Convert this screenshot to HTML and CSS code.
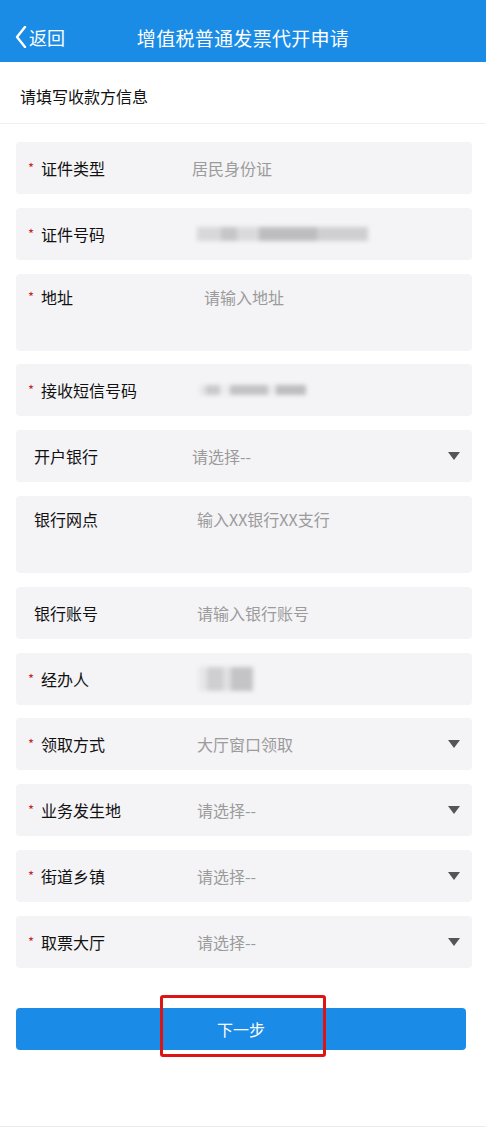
FILE: index.html
```html
<!DOCTYPE html>
<html lang="zh-CN">
<head>
    <meta charset="UTF-8">
    <meta name="viewport" content="width=device-width, initial-scale=1.0">
    <title>增值税普通发票代开申请</title>
    <link rel="stylesheet" href="styles.css">
</head>
<body>
    <div class="page">
        <!-- Top navigation bar -->
        <header class="nav-bar">
            <a class="back" href="#">
                <svg class="back-icon" width="12" height="22" viewBox="0 0 12 22">
                    <polyline points="10,1 2,11 10,21" fill="none" stroke="#fff" stroke-width="2.4" stroke-linecap="round" stroke-linejoin="round"/>
                </svg>
                <span>返回</span>
            </a>
            <h1 class="nav-title">增值税普通发票代开申请</h1>
        </header>

        <div class="section-title">请填写收款方信息</div>

        <!-- Payee form -->
        <form class="form" id="payeeForm">
            <div class="row">
                <div class="label"><span class="star">*</span>证件类型</div>
                <div class="value value-left">居民身份证</div>
            </div>
            <div class="row">
                <div class="label"><span class="star">*</span>证件号码</div>
                <div class="value"><span class="masked masked-id"></span></div>
            </div>
            <div class="row row-tall">
                <div class="label"><span class="star">*</span>地址</div>
                <div class="value value-right">请输入地址</div>
            </div>
            <div class="row">
                <div class="label"><span class="star">*</span>接收短信号码</div>
                <div class="value"><span class="masked masked-phone"></span></div>
            </div>
            <div class="row">
                <div class="label label-plain">开户银行</div>
                <div class="value value-left">请选择--</div>
                <span class="caret"></span>
            </div>
            <div class="row row-tall">
                <div class="label label-plain">银行网点</div>
                <div class="value">输入XX银行XX支行</div>
            </div>
            <div class="row">
                <div class="label label-plain">银行账号</div>
                <div class="value">请输入银行账号</div>
            </div>
            <div class="row">
                <div class="label"><span class="star">*</span>经办人</div>
                <div class="value"><span class="masked masked-name"></span></div>
            </div>
            <div class="row">
                <div class="label"><span class="star">*</span>领取方式</div>
                <div class="value">大厅窗口领取</div>
                <span class="caret"></span>
            </div>
            <div class="row">
                <div class="label"><span class="star">*</span>业务发生地</div>
                <div class="value">请选择--</div>
                <span class="caret"></span>
            </div>
            <div class="row">
                <div class="label"><span class="star">*</span>街道乡镇</div>
                <div class="value">请选择--</div>
                <span class="caret"></span>
            </div>
            <div class="row">
                <div class="label"><span class="star">*</span>取票大厅</div>
                <div class="value">请选择--</div>
                <span class="caret"></span>
            </div>

            <div class="submit-wrap">
                <button type="button" class="next-btn">下一步</button>
                <span class="highlight"></span>
            </div>
        </form>
    </div>
</body>
</html>
```

FILE: styles.css
```css
/* Page */
body {
    margin: 0;
    font-family: "Noto Sans CJK SC", "Noto Sans", sans-serif;
    background: #fff;
    color: #222;
}

.page {
    min-height: 1126px;
    border-bottom: 1px solid #ececec;
}

/* Navigation bar */
.nav-bar {
    position: relative;
    height: 62px;
    background: #1b8ce6;
    display: flex;
    align-items: center;
    justify-content: center;
}

.back {
    position: absolute;
    left: 15px;
    top: 0;
    height: 62px;
    display: flex;
    align-items: center;
    gap: 2px;
    color: #fff;
    text-decoration: none;
    font-size: 18px;
    padding-top: 12px;
    box-sizing: border-box;
}

.nav-title {
    margin: 12px 0 0;
    color: #fff;
    font-size: 19px;
    font-weight: normal;
    letter-spacing: 0.3px;
}

/* Section heading */
.section-title {
    height: 62px;
    padding: 22px 0 0 20px;
    box-sizing: border-box;
    font-size: 16px;
    color: #111;
    border-bottom: 1px solid #f0f0f2;
}

/* Form rows */
.form {
    padding: 18px 14px 0 16px;
    display: flex;
    flex-direction: column;
    gap: 13.8px;
}

.row {
    height: 52px;
    background: #f4f3f6;
    border-radius: 4px;
    display: grid;
    grid-template-columns: 169px 1fr auto;
    align-items: center;
    padding: 0 12px;
    font-size: 16px;
}

.row-tall {
    height: 77px;
    align-items: start;
    padding-top: 11px;
    box-sizing: border-box;
}

.label {
    color: #111;
    white-space: nowrap;
}

.star {
    display: inline-block;
    width: 13px;
    color: #c0282e;
    font-size: 13px;
    vertical-align: 2px;
}

.label-plain {
    padding-left: 6px;
}

.value {
    color: #9b9b9b;
}

.value-left {
    margin-left: -5px;
}

.value-right {
    margin-left: 7px;
}

/* Dropdown triangle */
.caret {
    width: 0;
    height: 0;
    border-left: 6.5px solid transparent;
    border-right: 6.5px solid transparent;
    border-top: 8px solid #555;
}

/* Blurred personal data */
.masked {
    display: block;
    filter: blur(2px);
}

.masked-id {
    width: 171px;
    height: 14px;
    background:
        linear-gradient(to right, #d8d8da 0 24px, #c6c6c8 24px 40px, #dadadb 40px 62px, #bdbdbf 62px 120px, #cfcfd1 120px 171px);
}

.masked-phone {
    width: 106px;
    height: 10px;
    margin-left: 3px;
    background:
        linear-gradient(to right, #e4e4e6 0 6px, #c9c9cb 6px 20px, #ececee 20px 30px, #c2c2c4 30px 68px, #eaeaec 68px 76px, #bdbdbf 76px 106px);
}

.masked-name {
    width: 54px;
    height: 24px;
    margin-left: 2px;
    background:
        linear-gradient(to right, #e6e6e8 0 8px, #cfcfd1 8px 24px, #e0e0e2 24px 32px, #c4c4c6 32px 54px);
}

/* Submit button */
.submit-wrap {
    position: relative;
    margin: 26px 6px 0 0;
}

.next-btn {
    width: 100%;
    height: 42px;
    border: none;
    border-radius: 4px;
    background: #1a8be6;
    color: #fff;
    font-family: inherit;
    font-size: 16px;
}

/* Red annotation box over the button */
.highlight {
    position: absolute;
    left: 144px;
    top: -13px;
    width: 166px;
    height: 62px;
    box-sizing: border-box;
    border: 3px solid #dd1414;
    border-radius: 3px;
}
```
